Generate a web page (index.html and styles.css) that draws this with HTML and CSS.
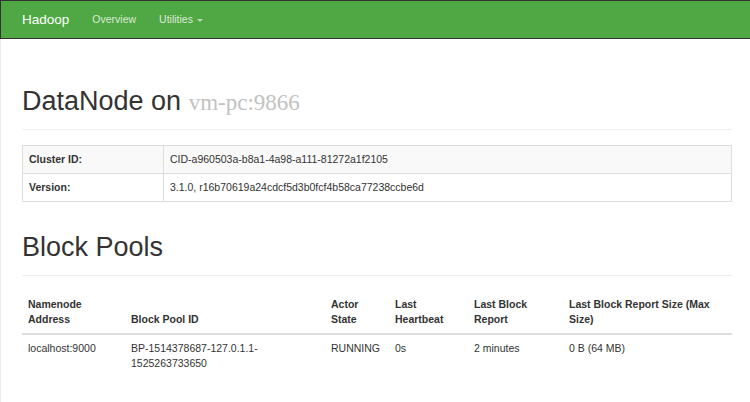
FILE: index.html
```html
<!DOCTYPE html>
<html>
<head>
<meta charset="utf-8">
<title>DataNode Information</title>
<link rel="stylesheet" href="styles.css">
</head>
<body>
<header class="navbar">
  <a class="brand" href="#">Hadoop</a>
  <nav class="nav">
    <a class="nav-link" href="#">Overview</a>
    <a class="nav-link" href="#">Utilities <span class="caret"></span></a>
  </nav>
</header>
<main class="page">
  <div class="page-header first">
    <h1>DataNode on <small class="host">vm-pc:9866</small></h1>
  </div>
  <table class="info-table">
    <colgroup><col class="label-col"><col></colgroup>
    <tbody>
      <tr class="striped"><th>Cluster ID:</th><td>CID-a960503a-b8a1-4a98-a111-81272a1f2105</td></tr>
      <tr><th>Version:</th><td>3.1.0, r16b70619a24cdcf5d3b0fcf4b58ca77238ccbe6d</td></tr>
    </tbody>
  </table>
  <div class="page-header">
    <h1>Block Pools</h1>
  </div>
  <table class="pool-table">
    <colgroup>
      <col class="c1"><col class="c2"><col class="c3"><col class="c4"><col class="c5"><col class="c6">
    </colgroup>
    <thead>
      <tr>
        <th>Namenode Address</th>
        <th>Block Pool ID</th>
        <th>Actor State</th>
        <th>Last Heartbeat</th>
        <th>Last Block Report</th>
        <th>Last Block Report Size (Max Size)</th>
      </tr>
    </thead>
    <tbody>
      <tr>
        <td>localhost:9000</td>
        <td>BP-1514378687-127.0.1.1-1525263733650</td>
        <td>RUNNING</td>
        <td>0s</td>
        <td>2 minutes</td>
        <td>0 B (64 MB)</td>
      </tr>
    </tbody>
  </table>
</main>
</body>
</html>
```
FILE: styles.css
```css
* { box-sizing: border-box; }
html, body {
  margin: 0;
  padding: 0;
  background: #fff;
}
body {
  font-family: "Liberation Sans", Arial, sans-serif;
  font-size: 10.5px;
  line-height: 15px;
  color: #333;
}
a { text-decoration: none; }

.navbar {
  height: 39px;
  background: #4fa843;
  border: 1px solid #333;
  border-right: 0;
  display: flex;
  align-items: center;
  padding-left: 21px;
}
.brand {
  color: #fff;
  font-size: 13.5px;
  line-height: 19px;
  padding-right: 11.5px;
}
.nav { display: flex; align-items: center; }
.nav-link {
  color: #dde8da;
  padding: 0 11.5px;
  display: flex;
  align-items: center;
}
.caret {
  display: inline-block;
  width: 0;
  height: 0;
  margin-left: 4px;
  margin-top: 1px;
  border-top: 3px solid #b9d9b2;
  border-left: 3px solid transparent;
  border-right: 3px solid transparent;
}

.page {
  display: flow-root;
  padding: 0 18px 30px 21px;
  border-left: 1px solid #ececec;
}

.page-header {
  margin-top: 30px;
  padding-bottom: 13px;
  border-bottom: 1px solid #eee;
  margin-bottom: 15px;
}
.page-header.first { margin-top: 47px; }
h1 {
  margin: 0;
  font-size: 27px;
  line-height: 30px;
  font-weight: normal;
  color: #333;
  white-space: nowrap;
}
.host {
  font-family: "Liberation Serif", "Times New Roman", serif;
  font-size: 23px;
  color: #c2c2c2;
  line-height: 0;
}

table {
  width: 100%;
  border-collapse: collapse;
  border-spacing: 0;
  table-layout: fixed;
}
th, td {
  padding: 6px;
  text-align: left;
  vertical-align: top;
  line-height: 15px;
}
th { font-weight: bold; }

.info-table { border: 1px solid #ddd; }
.info-table th, .info-table td { border: 1px solid #ddd; }
.info-table .label-col { width: 141px; }
.info-table .striped { background: #f9f9f9; }

.pool-table { margin-top: 1px; }
.pool-table thead th {
  vertical-align: bottom;
  border-bottom: 2px solid #ddd;
}
.pool-table .c1 { width: 103px; }
.pool-table .c2 { width: 200px; }
.pool-table .c3 { width: 64px; }
.pool-table .c4 { width: 79px; }
.pool-table .c5 { width: 95px; }
.pool-table .c6 { width: 169px; }
```
